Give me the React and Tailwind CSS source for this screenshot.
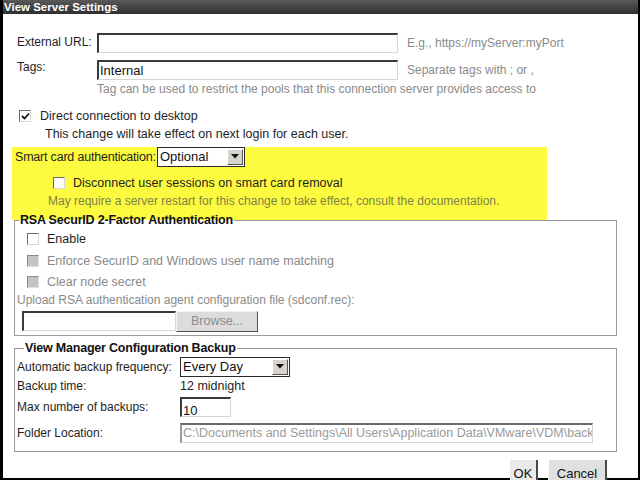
import React from 'react';

function Box({ checked, disabled }) {
  if (disabled) {
    return <div className="w-[12px] h-[12px] shrink-0 bg-[#c4c4c4] border border-t-[#8a8a8a] border-l-[#8a8a8a] border-r-[#e0e0e0] border-b-[#e0e0e0]" />;
  }
  return (
    <div className="w-[12px] h-[12px] shrink-0 bg-white border border-t-[#6b6b6b] border-l-[#6b6b6b] border-r-[#d8d8d8] border-b-[#d8d8d8] flex items-center justify-center">
      {checked && (
        <svg width="9" height="9" viewBox="0 0 9 9">
          <polyline points="1,4 3.5,6.5 8,1.5" fill="none" stroke="#111" strokeWidth="1.8" />
        </svg>
      )}
    </div>
  );
}

function Field({ w, children, className = '' }) {
  return (
    <div
      className={`h-[20px] shrink-0 bg-white border-t-2 border-l-2 border-t-[#3a3a3a] border-l-[#3a3a3a] border-r border-b border-r-[#d6d6d6] border-b-[#d6d6d6] overflow-hidden ${className}`}
      style={{ width: w }}
    >
      {children}
    </div>
  );
}

function Select({ w, value }) {
  return (
    <div className="h-[20px] shrink-0 flex items-stretch bg-white border border-[#2a2a2a]" style={{ width: w }}>
      <div className="flex-1 pl-[2px] text-[13px] leading-[17px] text-[#111]">{value}</div>
      <div className="w-[16px] my-[1px] mr-[1px] bg-[#d6d3cc] border border-t-white border-l-white border-r-[#555] border-b-[#555] flex items-center justify-center">
        <svg width="8" height="5" viewBox="0 0 8 5"><polygon points="0,0 8,0 4,4.5" fill="#111" /></svg>
      </div>
    </div>
  );
}

export default function App() {
  return (
    <div className="w-[640px] h-[480px] overflow-hidden bg-white font-['Liberation_Sans',Arial,sans-serif] text-[12px] text-[#1e1e1e]">
      <div className="h-full border-l-[3px] border-r-2 border-b-2 border-black">
        <div className="h-[14px] bg-gradient-to-b from-[#5a5a5a] to-[#2f2f2f] text-white font-bold text-[11.5px] leading-[14px] pl-[1px]">
          View Server Settings
        </div>

        <div className="mt-[19px] flex items-start">
          <div className="ml-[14px] w-[80px] leading-[16px] pt-[1px]">External URL:</div>
          <Field w={301} />
          <div className="ml-[9px] self-center text-[#8a8a8a] leading-[16px]">E.g., https://myServer:myPort</div>
        </div>

        <div className="mt-[7px] flex items-start">
          <div className="ml-[14px] w-[80px] leading-[14px]">Tags:</div>
          <Field w={301}>
            <div className="pl-[1px] text-[13px] leading-[17px] text-[#111]">Internal</div>
          </Field>
          <div className="ml-[9px] self-center text-[#8a8a8a] leading-[16px]">Separate tags with ; or ,</div>
        </div>

        <div className="mt-[1px] ml-[94px] h-[16px] leading-[16px] text-[#8a8a8a]">
          Tag can be used to restrict the pools that this connection server provides access to
        </div>

        <div className="mt-[11px] ml-[16px] h-[16px] flex items-center gap-[9px]">
          <Box checked />
          <span className="text-[12.5px]">Direct connection to desktop</span>
        </div>
        <div className="mt-[2px] ml-[42px] h-[16px] leading-[16px] text-[12.5px]">
          This change will take effect on next login for each user.
        </div>

        <div className="mt-[5px] ml-[9px] w-[535px] h-[73px] bg-[#fcfb3f]">
          <div className="h-[19px] flex items-center">
            <span className="ml-[3px] w-[142px] text-[12.5px] leading-[16px] tracking-[-0.2px]">Smart card authentication:</span>
            <Select w={88} value="Optional" />
          </div>
          <div className="mt-[9px] ml-[41px] h-[16px] flex items-center gap-[8px]">
            <Box />
            <span className="text-[12.5px]">Disconnect user sessions on smart card removal</span>
          </div>
          <div className="mt-[2px] ml-[36px] h-[16px] leading-[16px] text-[#7f7f4a]">
            May require a server restart for this change to take effect, consult the documentation.
          </div>
        </div>

        <fieldset className="-mt-[8px] ml-[11px] w-[603px] border border-[#9a9a9a] pb-[3px]">
          <legend className="ml-[4px] px-[1px] font-bold text-[12.5px] leading-[16px] text-[#111] tracking-[-0.2px]">
            RSA SecurID 2-Factor Authentication
          </legend>
          <div className="mt-[3px] ml-[12px] h-[16px] flex items-center gap-[8px]">
            <Box />
            <span className="text-[12.5px]">Enable</span>
          </div>
          <div className="mt-[6px] ml-[12px] h-[16px] flex items-center gap-[8px]">
            <Box disabled />
            <span className="text-[12.5px] text-[#8a8a8a]">Enforce SecurID and Windows user name matching</span>
          </div>
          <div className="mt-[5px] ml-[12px] h-[16px] flex items-center gap-[8px]">
            <Box disabled />
            <span className="text-[12.5px] text-[#8a8a8a]">Clear node secret</span>
          </div>
          <div className="mt-[2px] ml-[2px] h-[16px] leading-[16px] text-[#8a8a8a]">
            Upload RSA authentication agent configuration file (sdconf.rec):
          </div>
          <div className="mt-[3px] ml-[7px] flex items-start">
            <Field w={154} />
            <div className="w-[82px] h-[21px] bg-[#dcdcdc] border border-t-[#f4f4f4] border-l-[#f4f4f4] border-r-[#505050] border-b-[#505050] text-[#8c8c8c] text-[12.5px] leading-[19px] text-center">
              Browse...
            </div>
          </div>
        </fieldset>

        <fieldset className="mt-[4px] ml-[11px] w-[603px] border border-[#9a9a9a] pb-[8px]">
          <legend className="ml-[9px] px-[1px] font-bold text-[12.5px] leading-[16px] text-[#111] tracking-[-0.2px]">
            View Manager Configuration Backup
          </legend>
          <div className="flex items-center h-[21px]">
            <span className="ml-[2px] w-[163px]">Automatic backup frequency:</span>
            <Select w={110} value="Every Day" />
          </div>
          <div className="mt-[1px] flex items-center h-[16px]">
            <span className="ml-[2px] w-[163px]">Backup time:</span>
            <span className="text-[12.5px]">12 midnight</span>
          </div>
          <div className="mt-[3px] flex items-center h-[20px]">
            <span className="ml-[2px] w-[163px]">Max number of backups:</span>
            <Field w={51}>
              <div className="pl-[1px] pt-[5px] text-[13px] leading-[14px] text-[#111]">10</div>
            </Field>
          </div>
          <div className="mt-[6px] flex items-center h-[20px]">
            <span className="ml-[2px] w-[163px]">Folder Location:</span>
            <Field w={413} className="border-t-[#6a6a6a] border-l-[#9a9a9a]">
              <div className="pl-[1px] text-[12.5px] leading-[17px] text-[#9a9a9a] whitespace-nowrap">
                C:\Documents and Settings\All Users\Application Data\VMware\VDM\backups
              </div>
            </Field>
          </div>
        </fieldset>

        <div className="mt-[8px] flex justify-end pr-[31px] gap-[10px]">
          <div className="w-[28px] h-[28px] bg-[#e9e9e9] border-r-2 border-r-[#4a4a4a] text-[13px] leading-[28px] text-center text-[#111]">OK</div>
          <div className="w-[59px] h-[28px] bg-[#e0e0e0] border-l border-l-white border-r-2 border-r-[#4a4a4a] text-[13px] leading-[28px] text-center text-[#111]">Cancel</div>
        </div>
      </div>
    </div>
  );
}
